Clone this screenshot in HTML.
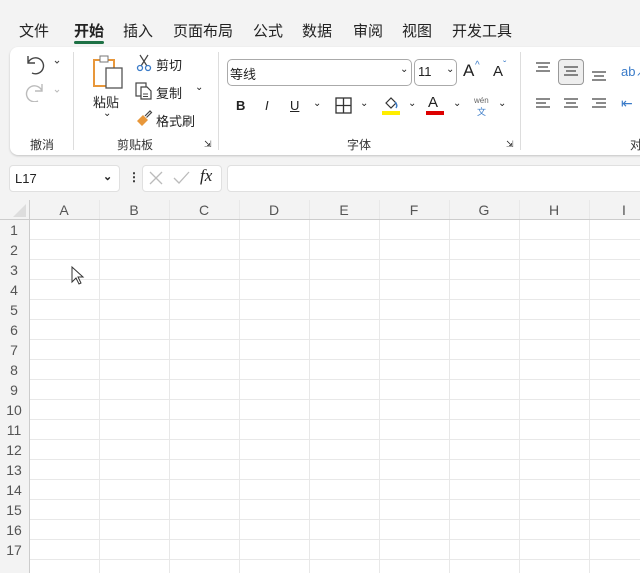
<!DOCTYPE html>
<html><head><meta charset="utf-8"><style>
body{margin:0;width:640px;height:573px;overflow:hidden;background:#f3f3f3;font-family:"Liberation Sans","Noto Sans CJK SC",sans-serif;position:relative;color:#222}
.a{position:absolute}
.tab{position:absolute;top:20px;font-size:15px;color:#222}
.card{position:absolute;left:10px;top:47px;width:660px;height:108px;background:#fff;border-radius:8px;box-shadow:0 1px 2px rgba(0,0,0,.2)}
.sep{position:absolute;top:52px;width:1px;height:98px;background:#ddd}
.lbl{position:absolute;top:136px;font-size:12px;color:#333}
.sm{font-size:13px;color:#222;position:absolute}
.box{position:absolute;background:#fff;border:1px solid #e0e0e0;border-radius:4px}
.grid{position:absolute;left:0;top:200px;width:640px;height:373px;background:#fff}
</style></head><body>
<div class="tab" style="left:19px">文件</div>
<div class="tab" style="left:74px;font-weight:bold">开始</div>
<div class="a" style="left:74px;top:41px;width:30px;height:3px;background:#1e7145;border-radius:2px"></div>
<div class="tab" style="left:123px">插入</div>
<div class="tab" style="left:173px">页面布局</div>
<div class="tab" style="left:253px">公式</div>
<div class="tab" style="left:302px">数据</div>
<div class="tab" style="left:353px">审阅</div>
<div class="tab" style="left:402px">视图</div>
<div class="tab" style="left:452px">开发工具</div>
<div class="card"></div>
<div class="sep" style="left:73px"></div><div class="sep" style="left:218px"></div><div class="sep" style="left:520px"></div>
<div class="lbl" style="left:30px">撤消</div>
<div class="lbl" style="left:117px">剪贴板</div>
<div class="lbl" style="left:347px">字体</div>
<div class="lbl" style="left:630px">对</div>
<div class="sm" style="left:204px;top:139px;font-size:9px">⇲</div>
<div class="sm" style="left:506px;top:139px;font-size:9px">⇲</div>
<svg class="a" style="left:24px;top:52px" width="40" height="50"><path d="M4 4v7h7M4 11a8 8 0 1 1 4 10" fill="none" stroke="#444" stroke-width="1.4"/><path d="M31 9l2 2 2-2" fill="none" stroke="#444"/><path d="M18 32v7h-7M18 39a8 8 0 1 0-4 10" fill="none" stroke="#bbb" stroke-width="1.4"/><path d="M31 38l2 2 2-2" fill="none" stroke="#bbb"/></svg>
<svg class="a" style="left:92px;top:54px" width="34" height="36"><rect x="2" y="6" width="20" height="26" fill="none" stroke="#e8973a" stroke-width="2"/><rect x="8" y="2" width="8" height="6" fill="#fff" stroke="#777"/><rect x="14" y="14" width="16" height="20" fill="#fff" stroke="#555" stroke-width="1.3"/></svg>
<div class="sm" style="left:93px;top:92px;font-size:13px">粘贴</div>
<div class="sm" style="left:103px;top:108px;font-size:10px">⌄</div>
<svg class="a" style="left:136px;top:54px" width="16" height="18"><path d="M4 1l7 11M12 1L5 12" stroke="#444" stroke-width="1.2"/><circle cx="4" cy="14" r="2.5" fill="none" stroke="#3a7bc8" stroke-width="1.3"/><circle cx="12" cy="14" r="2.5" fill="none" stroke="#3a7bc8" stroke-width="1.3"/></svg>
<div class="sm" style="left:156px;top:55px">剪切</div>
<svg class="a" style="left:135px;top:82px" width="18" height="18"><rect x="1" y="1" width="10" height="13" fill="none" stroke="#444" stroke-width="1.2"/><path d="M6 5h6l4 4v8H6z" fill="#fff" stroke="#444" stroke-width="1.2"/><path d="M8 12h5M8 14.5h5" stroke="#444"/></svg>
<div class="sm" style="left:156px;top:83px">复制</div>
<div class="sm" style="left:195px;top:82px;font-size:10px">⌄</div>
<svg class="a" style="left:135px;top:109px" width="18" height="18"><path d="M10 7l5-5 1.5 1.5-5 5" fill="none" stroke="#444" stroke-width="1.2"/><path d="M8 6l5 5-6 6-5-5z" fill="#e8973a"/></svg>
<div class="sm" style="left:156px;top:111px">格式刷</div>
<div class="box" style="left:227px;top:59px;width:183px;height:25px;border-color:#aaa;border-radius:5px"></div>
<div class="sm" style="left:230px;top:64px">等线</div>
<div class="sm" style="left:400px;top:64px;font-size:10px">⌄</div>
<div class="box" style="left:414px;top:59px;width:41px;height:25px;border-color:#aaa;border-radius:5px"></div>
<div class="sm" style="left:418px;top:64px;font-size:13px">11</div>
<div class="sm" style="left:446px;top:64px;font-size:10px">⌄</div>
<div class="sm" style="left:463px;top:61px;font-size:17px">A</div><div class="sm" style="left:475px;top:60px;font-size:10px;color:#3a7bc8">^</div>
<div class="sm" style="left:493px;top:63px;font-size:15px">A</div><div class="sm" style="left:503px;top:60px;font-size:10px;color:#3a7bc8">ˇ</div>
<div class="sm" style="left:236px;top:98px;font-weight:bold;font-size:13px">B</div>
<div class="sm" style="left:265px;top:98px;font-style:italic;font-size:13px">I</div>
<div class="sm" style="left:290px;top:98px;text-decoration:underline;font-size:13px">U</div>
<div class="sm" style="left:313px;top:98px;font-size:10px">⌄</div>
<svg class="a" style="left:335px;top:97px" width="18" height="18"><rect x="1" y="1" width="15" height="15" fill="none" stroke="#333" stroke-width="1.3"/><path d="M8.5 1v15M1 8.5h15" stroke="#333" stroke-width="1.3"/></svg>
<div class="sm" style="left:360px;top:98px;font-size:10px">⌄</div>
<svg class="a" style="left:383px;top:96px" width="18" height="14"><path d="M3 7l5-5 5 5-5 5z" fill="none" stroke="#333" stroke-width="1.2"/><path d="M12 6q3 3 1 6" fill="none" stroke="#3a7bc8" stroke-width="1.5"/></svg>
<div class="a" style="left:382px;top:111px;width:18px;height:4px;background:#ffee00"></div>
<div class="sm" style="left:408px;top:98px;font-size:10px">⌄</div>
<div class="sm" style="left:428px;top:94px;font-size:15px">A</div>
<div class="a" style="left:426px;top:111px;width:18px;height:4px;background:#d00"></div>
<div class="sm" style="left:453px;top:98px;font-size:10px">⌄</div>
<div class="sm" style="left:474px;top:96px;font-size:8px;color:#666">wén</div>
<div class="sm" style="left:477px;top:105px;font-size:9px;color:#3a7bc8">文</div>
<div class="sm" style="left:498px;top:98px;font-size:10px">⌄</div>
<div class="box" style="left:558px;top:59px;width:24px;height:24px;background:#eee;border-color:#999"></div>
<svg class="a" style="left:530px;top:55px" width="90" height="60" stroke="#444" stroke-width="1.3">
<path d="M6 8h14M8 12h10M6 16h14"/>
<path d="M34 12h14M36 16h10M34 20h14"/>
<path d="M62 17h14M64 21h10M62 25h14"/>
<path d="M6 44h14M6 48h10M6 52h14"/>
<path d="M34 44h14M36 48h10M34 52h14"/>
<path d="M62 44h14M66 48h10M62 52h14"/>
</svg>
<div class="sm" style="left:621px;top:61px;font-size:13px;color:#3a7bc8">ab↗</div>
<div class="sm" style="left:621px;top:95px;font-size:14px;color:#3a7bc8">⇤</div>
<div class="box" style="left:9px;top:165px;width:109px;height:25px"></div>
<div class="sm" style="left:15px;top:171px;font-size:13px">L17</div>
<div class="sm" style="left:103px;top:170px;font-size:11px;font-weight:bold">⌄</div>
<div class="sm" style="left:128px;top:170px;font-size:12px;font-weight:bold">⋮</div>
<div class="box" style="left:142px;top:165px;width:78px;height:25px"></div>
<svg class="a" style="left:148px;top:170px" width="46" height="16" stroke="#bbb" stroke-width="1.3" fill="none"><path d="M2 2l12 12M14 2L2 14"/><path d="M26 8l5 5 10-11"/></svg>
<div class="sm" style="left:200px;top:166px;font-size:17px;font-style:italic;font-family:'Liberation Serif',serif">fx</div>
<div class="box" style="left:227px;top:165px;width:430px;height:25px"></div>
<div class="grid">
<svg width="640" height="373" style="position:absolute;left:0;top:0">
<rect width="640" height="19" fill="#f3f3f3"/><rect width="29" height="373" fill="#f3f3f3"/>
<path d="M26 4v13H13z" fill="#ddd"/>
<g stroke="#e8e8e8">
<path d="M99.5 0v373M169.5 0v373M239.5 0v373M309.5 0v373M379.5 0v373M449.5 0v373M519.5 0v373M589.5 0v373"/>
<path d="M29 39.5h611M29 59.5h611M29 79.5h611M29 99.5h611M29 119.5h611M29 139.5h611M29 159.5h611M29 179.5h611M29 199.5h611M29 219.5h611M29 239.5h611M29 259.5h611M29 279.5h611M29 299.5h611M29 319.5h611M29 339.5h611M29 359.5h611"/>
</g>
<path d="M0 19.5h640M29.5 0v373" stroke="#ccc"/>
<g font-family="Liberation Sans" font-size="14" fill="#555" text-anchor="middle">
<text x="64" y="15">A</text><text x="134" y="15">B</text><text x="204" y="15">C</text><text x="274" y="15">D</text><text x="344" y="15">E</text><text x="414" y="15">F</text><text x="484" y="15">G</text><text x="554" y="15">H</text><text x="624" y="15">I</text>
<text x="14" y="35">1</text><text x="14" y="55">2</text><text x="14" y="75">3</text><text x="14" y="95">4</text><text x="14" y="115">5</text><text x="14" y="135">6</text><text x="14" y="155">7</text><text x="14" y="175">8</text><text x="14" y="195">9</text><text x="14" y="215">10</text><text x="14" y="235">11</text><text x="14" y="255">12</text><text x="14" y="275">13</text><text x="14" y="295">14</text><text x="14" y="315">15</text><text x="14" y="335">16</text><text x="14" y="355">17</text>
</g>
<path d="M72 67v15l4-4 3 6 2-1-3-6h5z" fill="#fff" stroke="#333"/>
</svg></div>
</body></html>
